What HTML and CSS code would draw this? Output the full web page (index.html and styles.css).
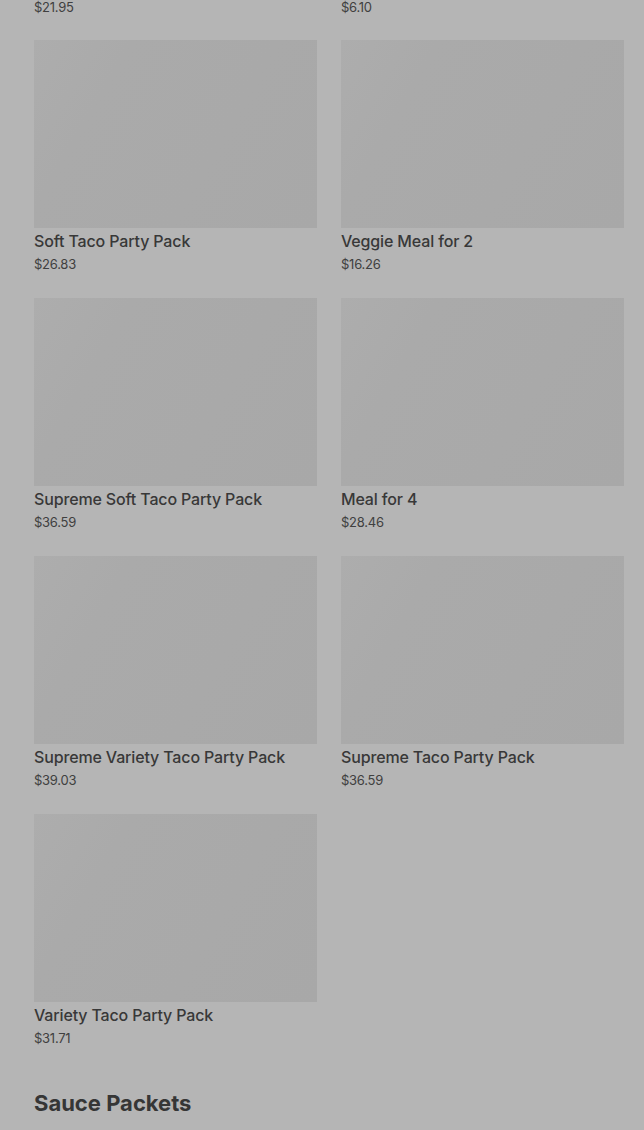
FILE: index.html
```html
<!DOCTYPE html>
<html lang="en">
<head>
    <meta charset="UTF-8">
    <meta name="viewport" content="width=device-width, initial-scale=1.0">
    <title>Party Packs</title>
    <link rel="stylesheet" href="styles.css">
</head>
<body>
    <div class="menu">
        <div class="grid">
            <div class="tail"><span class="price">$21.95</span></div>
            <div class="tail"><span class="price">$6.10</span></div>

            <div class="card">
                <div class="thumb"></div>
                <h3>Soft Taco Party Pack</h3>
                <span class="price">$26.83</span>
            </div>
            <div class="card">
                <div class="thumb"></div>
                <h3>Veggie Meal for 2</h3>
                <span class="price">$16.26</span>
            </div>
            <div class="card">
                <div class="thumb"></div>
                <h3>Supreme Soft Taco Party Pack</h3>
                <span class="price">$36.59</span>
            </div>
            <div class="card">
                <div class="thumb"></div>
                <h3>Meal for 4</h3>
                <span class="price">$28.46</span>
            </div>
            <div class="card">
                <div class="thumb"></div>
                <h3>Supreme Variety Taco Party Pack</h3>
                <span class="price">$39.03</span>
            </div>
            <div class="card">
                <div class="thumb"></div>
                <h3>Supreme Taco Party Pack</h3>
                <span class="price">$36.59</span>
            </div>
            <div class="card">
                <div class="thumb"></div>
                <h3>Variety Taco Party Pack</h3>
                <span class="price">$31.71</span>
            </div>
        </div>

        <h2 class="section">Sauce Packets</h2>
    </div>
</body>
</html>
```

FILE: styles.css
```css
body {
    margin: 0;
    padding: 0;
    background-color: #b5b5b5;
    font-family: Inter, "Noto Sans", sans-serif;
    color: #383838;
    overflow: hidden;
}
.menu {
    padding: 0 20px 0 34px;
    margin-top: -2px;
}
.grid {
    display: grid;
    grid-template-columns: 1fr 1fr;
    column-gap: 24px;
    row-gap: 25px;
}
.tail {
    height: 18px;
    margin-bottom: -1px;
}
.card {
    display: flex;
    flex-direction: column;
}
.thumb {
    height: 188px;
    background: linear-gradient(120deg, #adadad 0%, #aaaaaa 25%, #a8a8a8 100%);
}
.card h3 {
    margin: 2px 0 0;
    font-size: 16px;
    font-weight: 500;
    line-height: 22px;
    letter-spacing: -0.15px;
}
.price {
    display: block;
    margin-top: 3px;
    font-size: 13px;
    line-height: 18px;
    letter-spacing: -0.25px;
    color: #404040;
}
.tail .price {
    margin-top: 0;
}
.section {
    margin: 41px 0 0;
    font-size: 22px;
    font-weight: 700;
    line-height: 30px;
    color: #363636;
}
```
